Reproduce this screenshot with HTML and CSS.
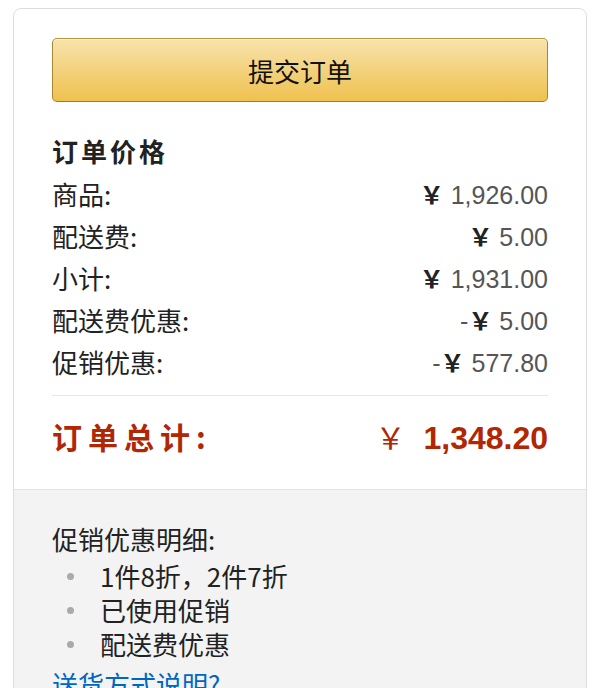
FILE: index.html
```html
<!DOCTYPE html>
<html>
<head>
  <meta charset="utf-8">
  <title>订单价格</title>
  <link rel="stylesheet" href="styles.css">
</head>
<body>

  <div class="order-box">
    <div class="order-main">
      <button type="button" class="submit-btn">提交订单</button>

      <h3 class="price-title">订单价格</h3>
      <div class="price-row">
        <span class="label">商品:</span>
        <span class="value"><span class="yen">￥</span> 1,926.00</span>
      </div>
      <div class="price-row">
        <span class="label">配送费:</span>
        <span class="value"><span class="yen">￥</span> 5.00</span>
      </div>
      <div class="price-row">
        <span class="label">小计:</span>
        <span class="value"><span class="yen">￥</span> 1,931.00</span>
      </div>
      <div class="price-row">
        <span class="label">配送费优惠:</span>
        <span class="value">-<span class="yen">￥</span> 5.00</span>
      </div>
      <div class="price-row">
        <span class="label">促销优惠:</span>
        <span class="value">-<span class="yen">￥</span> 577.80</span>
      </div>

      <hr class="divider">

      <div class="total-row">
        <span class="label">订单总计:</span>
        <span class="value"><span class="yen">￥</span>1,348.20</span>
      </div>
    </div>

    <div class="order-promo">
      <div class="promo-title">促销优惠明细:</div>
      <ul class="promo-list">
        <li>1件8折，2件7折</li>
        <li>已使用促销</li>
        <li>配送费优惠</li>
      </ul>
      <a href="#" class="promo-link">送货方式说明?</a>
    </div>
  </div>

</body>
</html>
```

FILE: styles.css
```css
body {
  margin: 0;
  padding: 0;
  background-color: #ffffff;
  font-family: "Noto Sans CJK SC", "Liberation Sans", sans-serif;
  color: #111111;
  overflow: hidden;
}

.order-box {
  margin: 8px 13px 0;
  border: 1px solid #dddddd;
  border-radius: 8px;
  overflow: hidden;
}

.order-main {
  padding: 29px 38px 28px;
}

.submit-btn {
  display: block;
  width: 100%;
  height: 64px;
  border: 1px solid #a88734;
  border-color: #b8973f #a88734 #9c7e31;
  border-radius: 5px;
  background: linear-gradient(to bottom, #f8e3ad, #efc14e);
  box-shadow: inset 0 1px 0 rgba(255, 255, 255, 0.5);
  font-family: "Noto Sans CJK SC", sans-serif;
  font-size: 26px;
  color: #111111;
  cursor: pointer;
}

.price-title {
  margin: 28px 0 0;
  font-size: 26px;
  line-height: 42px;
  font-weight: bold;
  letter-spacing: 3px;
  color: #222222;
}

.price-row {
  display: flex;
  justify-content: space-between;
  align-items: center;
  height: 42px;
  font-size: 26px;
}

.price-row .label {
  color: #222222;
}

.price-row .value {
  font-family: "Liberation Sans", Arial, sans-serif;
  font-size: 25px;
  color: #555555;
}

.price-row .yen {
  font-family: "Noto Sans CJK SC", sans-serif;
  font-weight: bold;
  font-size: 24px;
  color: #222222;
}

.divider {
  margin: 13px 0 15px;
  border: none;
  border-top: 1px solid #e7e7e7;
}

.total-row {
  display: flex;
  justify-content: space-between;
  align-items: center;
  height: 50px;
  color: #b12704;
  font-weight: bold;
}

.total-row .label {
  font-size: 30px;
  letter-spacing: 6px;
}

.total-row .value {
  font-family: "Liberation Sans", Arial, sans-serif;
  font-size: 32px;
}

.total-row .yen {
  font-family: "Noto Sans CJK SC", sans-serif;
  font-size: 30px;
  font-weight: normal;
  margin-right: 18px;
  color: #b12704;
}

.order-promo {
  background-color: #f3f3f3;
  border-top: 1px solid #e3e3e3;
  padding: 29px 38px 20px;
}

.promo-title {
  font-size: 26px;
  line-height: 40px;
  color: #222222;
}

.promo-list {
  list-style: none;
  margin: 0;
  padding: 0;
}

.promo-list li {
  position: relative;
  padding-left: 48px;
  font-size: 26px;
  line-height: 34px;
  color: #222222;
}

.promo-list li::before {
  content: "";
  position: absolute;
  left: 15px;
  top: 14px;
  width: 7px;
  height: 7px;
  border-radius: 50%;
  background-color: #aaaaaa;
}

.promo-link {
  display: block;
  font-size: 26px;
  line-height: 46px;
  color: #0066c0;
  text-decoration: none;
}
```
